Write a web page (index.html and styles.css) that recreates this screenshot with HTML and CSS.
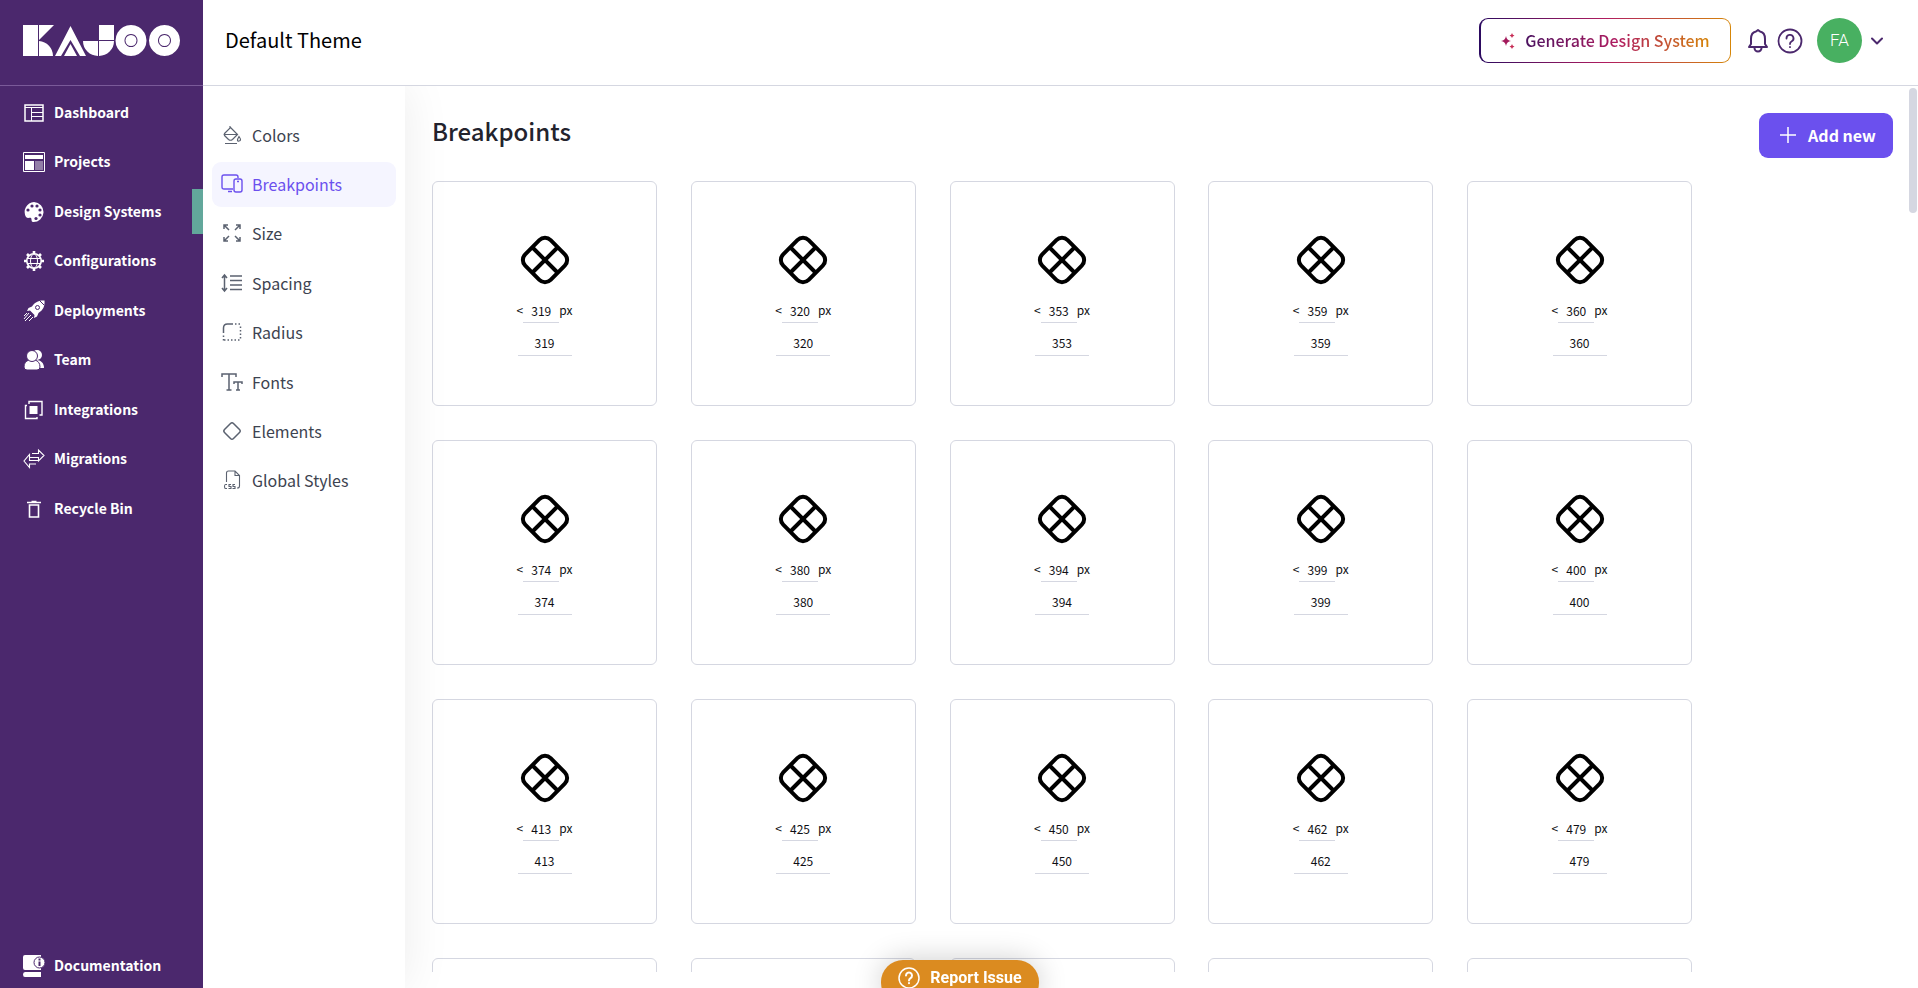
FILE: index.html
```
<!DOCTYPE html>
<html lang="en">
<head>
    <meta charset="UTF-8">
    <meta name="viewport" content="width=device-width, initial-scale=1.0">
    <title>Kajoo - Breakpoints</title>
    <link rel="stylesheet" href="styles.css">
</head>
<body>
    <aside class="sidebar">
        <a href="#" class="logo" aria-label="Kajoo">
            <svg width="158" height="32" viewBox="0 0 158 32" fill="#fff">
                <path d="M0 0h15v31H0zM16 0h15L16 15zM16 16a15 15 0 0 1 14 15H16z"/>
                <path d="M47.500 1L63 31h-6l-9.500-16L38 31h-6zM47.500 19L54 31H41z"/>
                <path d="M76 0h15v15H76zM60 16h15v15A15 15 0 0 1 60 16zM76 16h15A15 15 0 0 1 76 31z"/>
                <path fill-rule="evenodd" d="M108 0a15.500 15.500 0 1 0 .01 0zM108 9a6.500 6.500 0 1 1-.01 0z"/>
                <path fill-rule="evenodd" d="M141.500 0a15.500 15.500 0 1 0 .01 0zM141.500 9a6.500 6.500 0 1 1-.01 0z"/>
                <circle cx="108" cy="15.500" r="5.500"/>
                <circle cx="141.500" cy="15.500" r="5.500"/>
            </svg>
        </a>
        <nav class="main-nav">
            <a href="#">
                <svg width="22" height="22" viewBox="0 0 22 22" fill="none" stroke="#fff"><path d="M2 3h18v16H2z" stroke-width="1.500"/><path d="M2 5.500h18M8.500 6v13M9 10.500h11M9 14.500h11"/></svg>
                Dashboard
            </a>
            <a href="#">
                <svg width="22" height="22" viewBox="0 0 22 22" fill="#fff"><path d="M.5 1.500h21v19H.5z" fill="none" stroke="#fff"/><path d="M2 4h18v4H2zM2 10h9v9H2z"/><path d="M12 10h8v9h-8z" opacity=".4"/></svg>
                Projects
            </a>
            <a href="#" class="active">
                <svg width="22" height="22" viewBox="0 0 22 22"><path d="M11 1a10 10 0 1 1-1 20c-2 0-1-3-2-4s-3 1-5-1A10 10 0 0 1 11 1z" fill="#fff"/><g fill="#4b286d"><circle cx="5" cy="9" r="1.600"/><circle cx="9" cy="5" r="1.600"/><circle cx="14" cy="5" r="1.600"/><circle cx="17" cy="9" r="1.600"/><circle cx="17" cy="14" r="1.600"/><circle cx="13" cy="17.500" r="1.600"/></g></svg>
                Design Systems
            </a>
            <a href="#">
                <svg width="22" height="22" viewBox="0 0 22 22" fill="none" stroke="#fff"><circle cx="11" cy="11" r="7.200" stroke-width="1.600"/><ellipse cx="11" cy="11" rx="3.500" ry="7"/><path d="M4 8.500h14M4 13.500h14"/><path d="M11 1v3M11 18v3M1 11h3M18 11h3M4 4l2 2M16 16l2 2M18 4l-2 2M6 16l-2 2" stroke-width="2.600"/></svg>
                Configurations
            </a>
            <a href="#">
                <svg width="22" height="22" viewBox="0 0 22 22"><path d="M21.500.5c-6-.5-10 2-12.500 6l-3.500 1.500L4 11l3-.5 4.500 4.500-.5 3 3-1.500 1.500-3.500c4.500-3 6.500-6.500 6-12.500z" fill="#fff"/><circle cx="14.500" cy="7.500" r="2" fill="#fff" stroke="#4b286d"/><path d="M17 1l4 4" stroke="#4b286d"/><path d="M6 13l-5 6M8 15l-6 6M10 17l-4 4M4 13l-3 3" stroke="#fff"/></svg>
                Deployments
            </a>
            <a href="#">
                <svg width="22" height="22" viewBox="0 0 22 22" fill="#fff"><circle cx="14" cy="6" r="5"/><path d="M13 11c5 0 8 3 8 8h-6z"/><path d="M1 18c0-4 2-6 5-7h6c3 1 5 3 5 7q0 3-3 3H4q-3 0-3-3z" stroke="#4b286d"/><circle cx="9" cy="7" r="5.500" stroke="#4b286d"/></svg>
                Team
            </a>
            <a href="#">
                <svg width="22" height="22" viewBox="0 0 22 22"><path d="M6.500 7h8v8h-8z" fill="#fff"/><path d="M6 5V2.500h13V16h-2.500M4 6.500H2.500v13H14V18" fill="none" stroke="#fff" stroke-width="1.400"/></svg>
                Integrations
            </a>
            <a href="#">
                <svg width="22" height="22" viewBox="0 0 22 22" fill="none" stroke="#fff" stroke-width="1.100"><path d="M9 5.500h6.500V2L21 7.500 15.500 13V9.500H6.500v-3L1 13l5.500 6.500V16H13M6.500 9.500v3H15"/></svg>
                Migrations
            </a>
            <a href="#">
                <svg width="22" height="22" viewBox="0 0 22 22" fill="none" stroke="#fff" stroke-width="1.600"><path d="M6.500 7h9v12h-9zM4 4.500h14M8.500 3.500h5"/></svg>
                Recycle Bin
            </a>
        </nav>
        <nav class="docs-nav">
            <a href="#">
                <svg width="22" height="22" viewBox="0 0 22 22"><path d="M2 0h16v15H2q-2 0-2-2V2q0-2 2-2zM2 17h16v5H2q-2 0-2-2.500T2 17z" fill="#fff"/><circle cx="16.500" cy="7.500" r="5.500" fill="#fff" stroke="#4b286d"/><path d="M16.500 3.500v2M16.500 6.500v4.500" stroke="#4b286d" stroke-width="2"/></svg>
                Documentation
            </a>
        </nav>
    </aside>

    <div class="page">
        <header class="topbar">
            <h1>Default Theme</h1>
            <div class="topbar-actions">
                <button type="button" class="generate-btn">
                    <svg width="14" height="16" viewBox="0 0 14 16"><path d="M5 3q.7 4.300 5 5-4.300.7-5 5-.7-4.300-5-5 4.300-.7 5-5z" fill="#a3195b"/><path d="M11 0q.4 2 2.500 2.500-2.100.5-2.500 2.500-.4-2-2.500-2.500Q10.600 2 11 0zM11 11q.4 2 2.500 2.500-2.100.5-2.500 2.500-.4-2-2.500-2.500Q10.600 13 11 11z" fill="#c72c55"/></svg>
                    <span>Generate Design System</span>
                </button>
                <button type="button" class="icon-btn" aria-label="Notifications">
                    <svg width="22" height="26" viewBox="0 0 22 26" fill="none" stroke="#4b286d" stroke-width="2" stroke-linejoin="round"><path d="M2 19h18l-2-3v-5c0-4-2-7-5-7.500L11 2 9 3.500C6 4 4 7 4 11v5zM7.500 20a3.500 3.500 0 0 0 7 0"/></svg>
                </button>
                <button type="button" class="icon-btn" aria-label="Help">
                    <svg width="26" height="26" viewBox="0 0 26 26" fill="none" stroke="#4b286d" stroke-width="1.800" stroke-linecap="round"><circle cx="13" cy="13" r="11.500"/><path d="M9.500 10.500a3.500 3.500 0 1 1 5 3q-1.500.8-1.500 2.500M13 19v.2"/></svg>
                </button>
                <button type="button" class="user-btn">
                    <span class="avatar">FA</span>
                    <svg width="12" height="8" viewBox="0 0 12 8" fill="none" stroke="#4b286d" stroke-width="2" stroke-linecap="round" stroke-linejoin="round"><path d="M1 1.500l5 5 5-5"/></svg>
                </button>
            </div>
        </header>

        <div class="workspace">
            <nav class="theme-nav">
                <a href="#">
                    <svg width="22" height="22" viewBox="0 0 22 22" fill="none" stroke="#5b6270" stroke-width="1.200"><path d="M9 2v2.500M9.500 3.500l7 7-5 5q-2 1.500-4 0l-4-4q-.8-1 0-2zM3 10.500h13M18 12.500q3 4 0 4.500t0-4.500zM4 19.500h12"/></svg>
                    Colors
                </a>
                <a href="#" class="active">
                    <svg width="22" height="22" viewBox="0 0 22 22" fill="none" stroke="#6b50ee" stroke-width="1.400"><path d="M12 16H3q-2 0-2-2V4q0-2 2-2h12q2 0 2 2v1M7 18.500h4"/><rect x="13" y="6" width="8" height="13" rx="2"/><path d="M16 8.500h2"/></svg>
                    Breakpoints
                </a>
                <a href="#">
                    <svg width="22" height="22" viewBox="0 0 22 22" fill="none" stroke="#5b6270" stroke-width="1.500"><path d="M3 7V3h4M3 3l5 5M15 3h4v4M19 3l-5 5M3 15v4h4M3 19l5-5M19 15v4h-4M19 19l-5-5"/></svg>
                    Size
                </a>
                <a href="#">
                    <svg width="22" height="22" viewBox="0 0 22 22" fill="none" stroke="#5b6270" stroke-width="1.500"><path d="M1 6l2.500-3L6 6M3.500 3v16M1 16l2.500 3L6 16M9 4h12M9 8.500h12M9 13h12M9 17.500h12"/></svg>
                    Spacing
                </a>
                <a href="#">
                    <svg width="22" height="22" viewBox="0 0 22 22" fill="none" stroke="#5b6270" stroke-width="1.500"><path d="M2.500 12V7q0-4 4-4H12"/><path d="M14 3h6M19.500 5.500V18M2.500 14.500V20M3 19h17" stroke-dasharray="1.500 2"/></svg>
                    Radius
                </a>
                <a href="#">
                    <svg width="22" height="22" viewBox="0 0 22 22" fill="none" stroke="#5b6270" stroke-width="1.500"><path d="M1 6V3h14v3M8 3v16M5.500 19h5M13 13v-2h8v2M17 11v8M15 19h4"/></svg>
                    Fonts
                </a>
                <a href="#">
                    <svg width="22" height="22" viewBox="0 0 22 22" fill="none" stroke="#5b6270" stroke-width="1.500"><path d="M9.500 3.500q1.500-1.500 3 0l6 6q1.500 1.500 0 3l-6 6q-1.500 1.500-3 0l-6-6q-1.500-1.500 0-3z"/></svg>
                    Elements
                </a>
                <a href="#">
                    <svg width="22" height="22" viewBox="0 0 22 22" fill="none" stroke="#5b6270" stroke-width="1.100"><path d="M5.500 13V4q0-2 2-2H14l4.500 4.500V17q0 2-2 2H16M14 2v4.500h4.500"/><path d="M6 15.500H4.500q-1 0-1 2t1 2H6M10 15.500H8v2h2v2H7.500M14 15.500h-2v2h2v2h-2.500"/></svg>
                    Global Styles
                </a>
            </nav>

            <main class="content">
                <div class="content-head">
                    <h2>Breakpoints</h2>
                    <button type="button" class="add-btn">
                        <svg width="16" height="16" viewBox="0 0 16 16" stroke="#fff" stroke-width="1.500"><path d="M0 8h16M8 0v16"/></svg>
                        Add new
                    </button>
                </div>
                <div class="cards" id="cards"></div>
            </main>
            <div class="scroll-thumb"></div>
        </div>
    </div>

    <button type="button" class="report-btn">
        <svg width="22" height="22" viewBox="0 0 22 22" fill="none" stroke="#fff" stroke-width="1.500" stroke-linecap="round"><circle cx="11" cy="11" r="10"/><path d="M8 8.500a3 3 0 1 1 4.500 2.600Q11 12 11 13.500M11 16v.2" stroke-width="2"/></svg>
        Report Issue
    </button>

    <script>
        const breakpoints = [319, 320, 353, 359, 360, 374, 380, 394, 399, 400, 413, 425, 450, 462, 479, 480, 540, 568, 600, 640];

        document.getElementById('cards').innerHTML = breakpoints.map(value => `
            <div class="card">
                <svg width="50" height="50" viewBox="0 0 50 50" fill="none" stroke="#000" stroke-width="4">
                    <rect x="7" y="7" width="36" height="36" rx="8" transform="rotate(45 25 25)"/>
                    <path d="M12.500 12.500l25 25M37.500 12.500l-25 25"/>
                </svg>
                <label class="limit">&lt;<input type="text" value="${value}">px</label>
                <input type="text" class="name" value="${value}" aria-label="Breakpoint name">
            </div>`).join('');
    </script>
</body>
</html>
```
FILE: styles.css
```
* {
    box-sizing: border-box;
}

body {
    margin: 0;
    height: 100vh;
    display: flex;
    overflow: hidden;
    font-family: 'Noto Sans CJK SC', sans-serif;
    font-size: 16px;
    color: #0f0f14;
    background: #fff;
}

a {
    color: inherit;
    text-decoration: none;
}

button,
input {
    font: inherit;
    color: inherit;
}

button {
    border: none;
    background: none;
    padding: 0;
    cursor: pointer;
}

svg {
    display: block;
    flex-shrink: 0;
}

/* Sidebar */
.sidebar {
    width: 203px;
    flex-shrink: 0;
    display: flex;
    flex-direction: column;
    background: #4b286d;
    color: #fff;
}

.logo {
    height: 86px;
    padding: 25px 23px;
    border-bottom: 1px solid #7a5a99;
}

.main-nav {
    height: 441px;
    margin-top: 4px;
    display: flex;
    flex-direction: column;
    justify-content: space-between;
}

.main-nav a,
.docs-nav a {
    height: 45px;
    padding: 0 0 2px 23px;
    display: flex;
    align-items: center;
    gap: 9px;
    font-size: 14px;
    font-weight: 700;
}

.main-nav svg,
.docs-nav svg {
    margin-top: 2px;
}

.main-nav .active {
    border-right: 11px solid #62a79b;
}

.docs-nav {
    margin-top: auto;
}

/* Top bar */
.page {
    flex: 1;
    min-width: 0;
    display: flex;
    flex-direction: column;
}

.topbar {
    height: 86px;
    flex-shrink: 0;
    padding: 0 35px 4px 22px;
    display: flex;
    align-items: center;
    justify-content: space-between;
    border-bottom: 1px solid #d5d7e1;
}

.topbar h1 {
    margin: 0;
    padding-bottom: 2px;
    font-size: 20px;
    font-weight: 400;
    color: #000;
}

.topbar-actions {
    display: flex;
    align-items: center;
}

.generate-btn {
    height: 45px;
    width: 252px;
    margin-right: 16px;
    display: flex;
    align-items: center;
    justify-content: center;
    gap: 10px;
    border: 1px solid transparent;
    border-left-width: 2px;
    border-radius: 9px;
    font-weight: 500;
    background: linear-gradient(#fff, #fff) padding-box, linear-gradient(90deg, #2b0a60, #b01c60 50%, #d68608) border-box;
}

.generate-btn span {
    padding-bottom: 2px;
    color: transparent;
    background: linear-gradient(90deg, #4b1260, #b01c60 50%, #d68608);
    background-clip: text;
}

.icon-btn {
    margin-right: 8px;
}

.user-btn {
    margin-left: 6px;
    display: flex;
    align-items: center;
    gap: 9px;
}

.avatar {
    width: 45px;
    height: 45px;
    border-radius: 50%;
    background: #48b061;
    color: #fff;
    font-family: Roboto, sans-serif;
    font-size: 17px;
    font-weight: 300;
    line-height: 45px;
}

/* Theme navigation */
.workspace {
    position: relative;
    flex: 1;
    min-height: 0;
    display: flex;
}

.theme-nav {
    width: 202px;
    flex-shrink: 0;
    padding: 27px 9px 0;
    box-shadow: 0 0 45px rgba(0, 0, 0, 0.08);
    clip-path: inset(0 -60px 0 0);
    display: grid;
    grid-auto-rows: 45px;
    align-content: space-between;
    padding-bottom: calc(100vh - 86px - 27px - 391px);
    color: #3d4350;
}

.theme-nav a {
    padding: 0 0 2px 9px;
    display: flex;
    align-items: center;
    gap: 9px;
    border-radius: 9px;
}

.theme-nav .active {
    color: #6b50ee;
    background: #f5f5ff;
}

/* Breakpoint cards */
.content {
    flex: 1;
    min-width: 0;
    margin-bottom: 16px;
    padding: 27px 25px 0 27px;
    overflow-y: auto;
    scrollbar-width: none;
}

.scroll-thumb {
    position: absolute;
    top: 2px;
    right: 1px;
    width: 8px;
    height: 125px;
    border-radius: 4px;
    background: #d5d7e1;
}

.content-head {
    display: flex;
    justify-content: space-between;
}

.content-head h2 {
    margin: 0;
    font-size: 24px;
    font-weight: 500;
    line-height: 36px;
    color: #23232d;
}

.add-btn {
    width: 134px;
    height: 45px;
    padding: 0 0 2px 4px;
    display: flex;
    align-items: center;
    justify-content: center;
    gap: 12px;
    border-radius: 9px;
    background: #6b50ee;
    color: #fff;
    font-weight: 700;
}

.cards {
    max-width: 1260px;
    margin-top: 23px;
    display: grid;
    grid-template-columns: repeat(auto-fill, 225px);
    justify-content: space-between;
    row-gap: 34px;
}

.card {
    height: 225px;
    padding-top: 53px;
    display: flex;
    flex-direction: column;
    align-items: center;
    border: 1px solid #d5d7e1;
    border-radius: 6px;
    font-size: 12px;
}

.card input {
    border: none;
    border-bottom: 1px solid #d5d7e1;
    background: none;
    padding: 0;
    text-align: center;
    outline: none;
}

.limit {
    margin-top: 14px;
    display: flex;
    line-height: 22px;
}

.limit input {
    width: 36px;
    height: 24px;
    padding-bottom: 1px;
}

.card .name {
    width: 54px;
    height: 24px;
    margin-top: 9px;
    padding-bottom: 2px;
}

/* Report button */
.report-btn {
    position: fixed;
    left: 50%;
    bottom: -17px;
    width: 158px;
    height: 45px;
    margin-left: -78px;
    padding-bottom: 10px;
    display: flex;
    align-items: center;
    justify-content: center;
    gap: 10px;
    border-radius: 22px;
    background: #db8b20;
    box-shadow: 0 0 30px rgba(0, 0, 0, 0.2);
    color: #fff;
    font-family: Roboto, sans-serif;
    font-weight: 700;
}
```
